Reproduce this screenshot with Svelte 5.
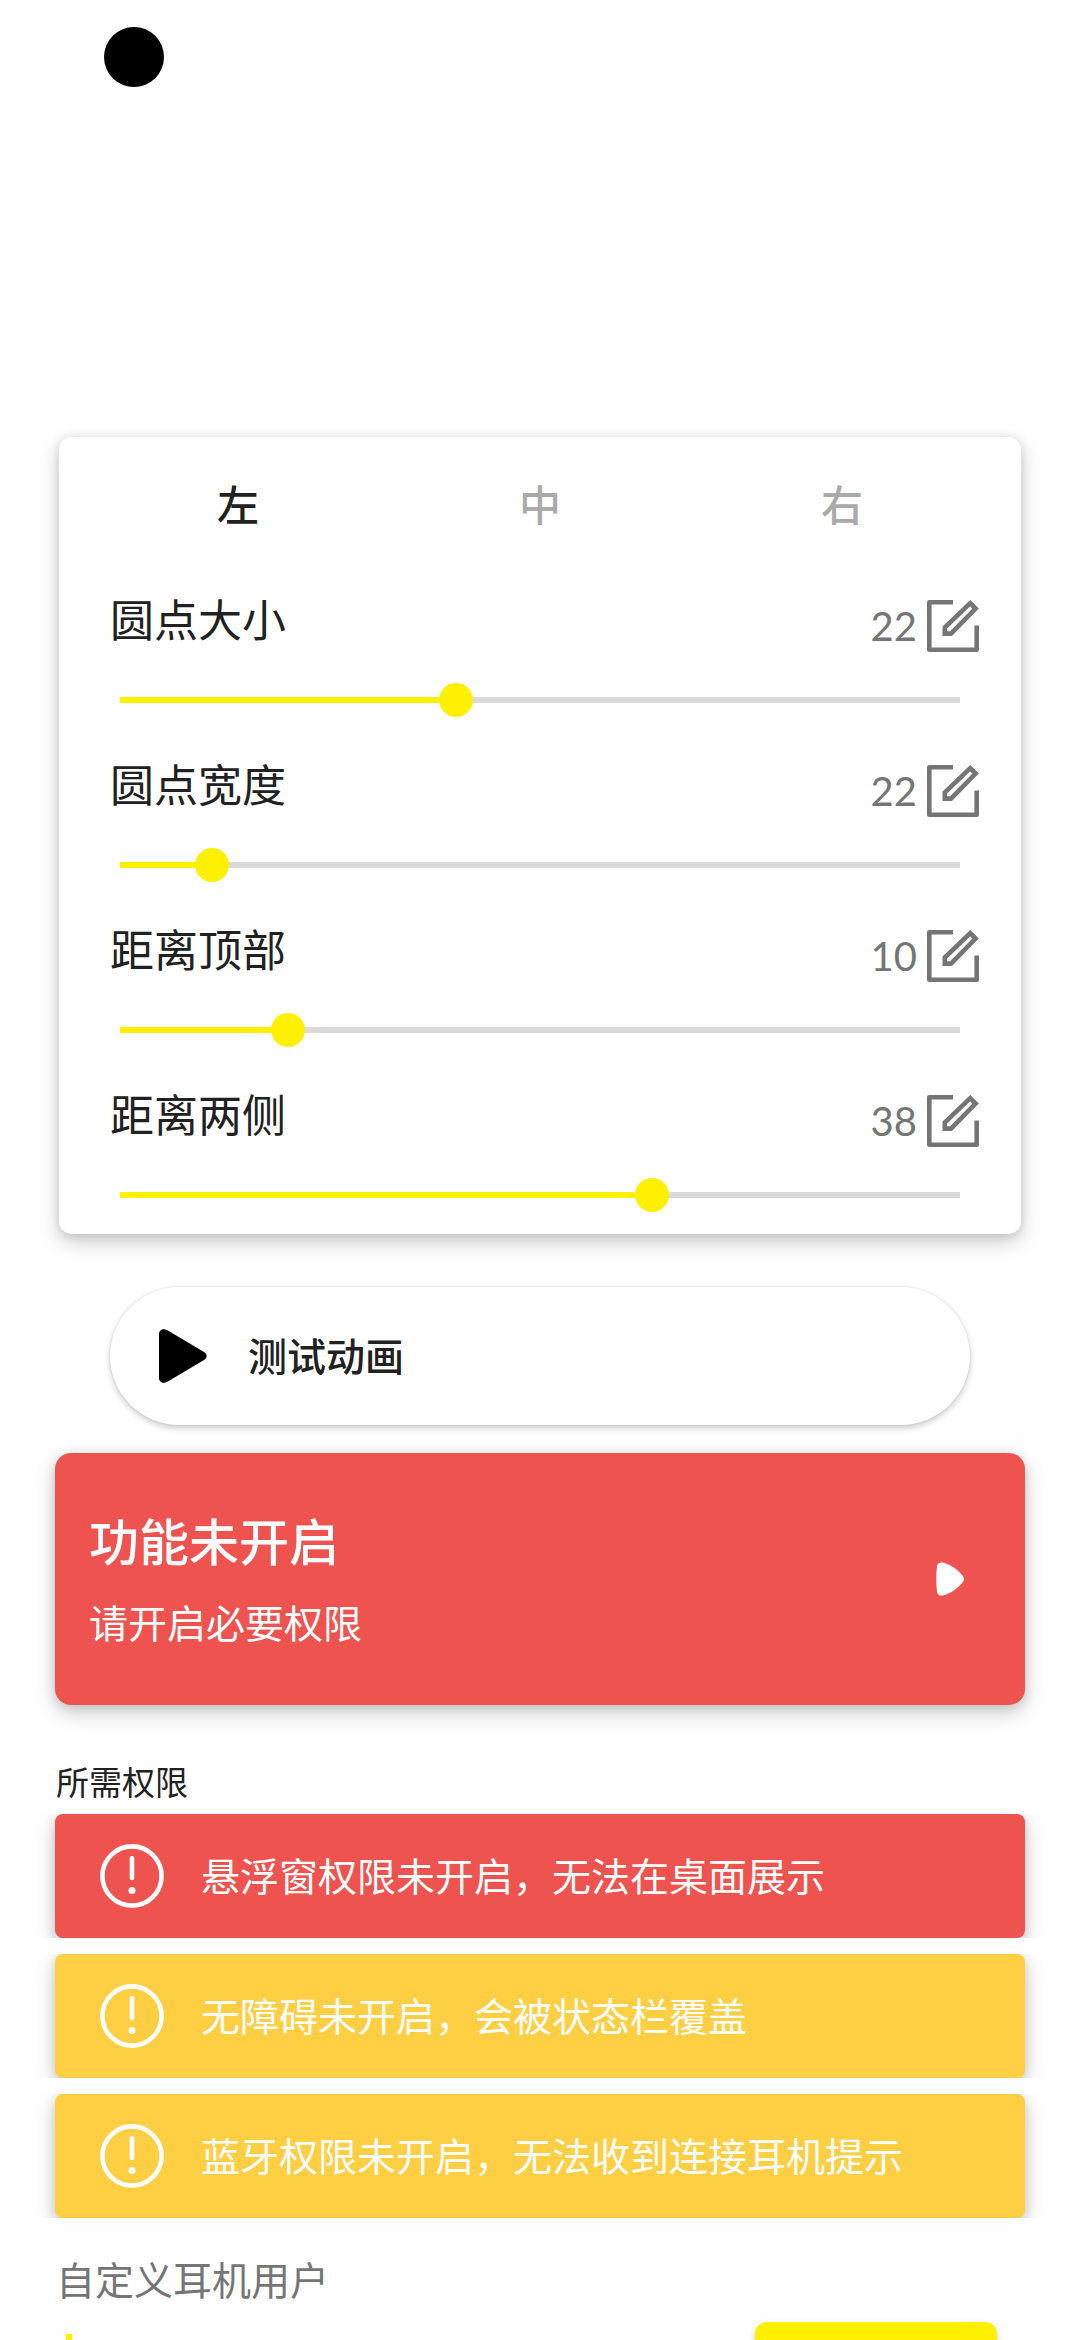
<script lang="ts">
  type Setting = { id: string; label: string; value: number; max: number }

  // px per dp for the preview dot
  const DENSITY = 2.73

  const tabs = [
    { id: 'left', label: '左' },
    { id: 'center', label: '中' },
    { id: 'right', label: '右' },
  ]

  const permissions = [
    { level: 'error', text: '悬浮窗权限未开启，无法在桌面展示' },
    { level: 'warn', text: '无障碍未开启，会被状态栏覆盖' },
    { level: 'warn', text: '蓝牙权限未开启，无法收到连接耳机提示' },
  ]

  let side = $state('left')
  let user = $state('')
  let settings: Setting[] = $state([
    { id: 'size', label: '圆点大小', value: 22, max: 55 },
    { id: 'width', label: '圆点宽度', value: 22, max: 200 },
    { id: 'top', label: '距离顶部', value: 10, max: 50 },
    { id: 'edge', label: '距离两侧', value: 38, max: 60 },
  ])

  const px = (dp: number) => Math.round(dp * DENSITY)
</script>

<main>
  <div
    class="preview {side}"
    style="padding: {px(settings[2].value)}px {px(settings[3].value)}px 0"
  >
    <div
      class="dot"
      style="width: {px(settings[1].value)}px; height: {px(settings[0].value)}px"
    ></div>
  </div>

  <section class="card">
    <div class="tabs" role="tablist">
      {#each tabs as tab (tab.id)}
        <button
          type="button"
          role="tab"
          aria-selected={side === tab.id}
          class:active={side === tab.id}
          onclick={() => (side = tab.id)}>{tab.label}</button
        >
      {/each}
    </div>

    <div class="settings">
      {#each settings as s (s.id)}
        <div class="setting">
          <div class="head">
            <label for={s.id}>{s.label}</label>
            <output for={s.id}>{s.value}</output>
            <button type="button" class="edit" aria-label={s.label}>
              <svg viewBox="0 0 52 52" fill="none" stroke="currentColor" stroke-width="4.600">
                <path d="M26 2.300H2.300v47.400h47.400V25.500" stroke-linejoin="round" />
                <path d="M43.200 3.200l5.400 5.300L24 33.600h-6.200v-6z" />
              </svg>
            </button>
          </div>
          <input
            id={s.id}
            type="range"
            min="0"
            max={s.max}
            bind:value={s.value}
            style="--fill: {(s.value / s.max) * 100}%"
          />
        </div>
      {/each}
    </div>
  </section>

  <button type="button" class="test">
    <svg viewBox="0 0 48 54" aria-hidden="true">
      <path d="M0 5C0 1 4 -1 8 1L45 23C48.500 25 48.500 29 45 31L8 53C4 55 0 53 0 49Z" />
    </svg>
    <span class="caption">测试动画</span>
  </button>

  <button type="button" class="status">
    <span class="status-text">
      <strong>功能未开启</strong>
      <span>请开启必要权限</span>
    </span>
    <svg viewBox="0 0 30 34" aria-hidden="true">
      <path
        d="M2 4C2.500 1 5 0 8 0.500C15 2 23 8 27.500 13.500C29.500 16 29.500 18 27.500 20.500C23 26 15 32 8 33.500C5 34 2.500 33 2 30C1 22 1 12 2 4Z"
      />
    </svg>
  </button>

  <h2>所需权限</h2>
  <div class="permissions">
    {#each permissions as p (p.text)}
      <button type="button" class="permission {p.level}">
        <svg viewBox="0 0 64 64" fill="none" stroke="currentColor" aria-hidden="true">
          <circle cx="32" cy="32" r="29.600" stroke-width="4.600" />
          <path d="M32 14.200V34" stroke-width="4.600" stroke-linecap="round" />
          <circle cx="32" cy="46.500" r="3.500" fill="currentColor" stroke="none" />
        </svg>
        <span class="caption">{p.text}</span>
      </button>
    {/each}
  </div>

  <label class="user-label" for="user">自定义耳机用户</label>
  <div class="user">
    <input id="user" type="text" autocomplete="off" bind:value={user} />
    <button type="button" aria-label="自定义耳机用户"></button>
  </div>
</main>

<style>
  :global(body) {
    background: #fefefe;
  }

  main {
    --red: #ee534f;
    --amber: #fece43;
    --yellow: #fff000;
    --ink: #212121;
    --grey: #757575;
    --shadow: 0 8px 20px rgba(0, 0, 0, 0.18), 0 2px 12px rgba(0, 0, 0, 0.12);
    display: flex;
    flex-direction: column;
    box-sizing: border-box;
    height: 100vh;
    padding: 0 55px;
    overflow-y: auto;
    scrollbar-width: none;
    color: var(--ink);
    font-family: 'Noto Sans CJK SC', sans-serif;
  }

  main > * {
    flex-shrink: 0;
  }

  button {
    padding: 0;
    border: none;
    background: none;
    color: inherit;
    font: inherit;
    text-align: left;
    cursor: pointer;
  }

  svg {
    display: block;
    flex: none;
  }

  .preview {
    display: flex;
    box-sizing: border-box;
    height: 437px;
    margin: 0 -55px;
  }

  .preview.center {
    justify-content: center;
  }

  .preview.right {
    justify-content: flex-end;
  }

  .dot {
    border-radius: 999px;
    background: #000;
  }

  .card {
    margin: 0 4px;
    padding-bottom: 22px;
    border-radius: 13px;
    background: #fff;
    box-shadow: var(--shadow);
  }

  .tabs {
    display: grid;
    grid-template-columns: repeat(3, 1fr);
    padding: 0 28px;
  }

  .tabs button {
    height: 136px;
    padding-bottom: 6px;
    color: #aaa;
    font-size: 42px;
    font-weight: 500;
    text-align: center;
  }

  .tabs .active {
    color: var(--ink);
  }

  .settings {
    display: flex;
    flex-direction: column;
    gap: 42px;
    padding: 21px 42px 0;
  }

  .head {
    display: flex;
    align-items: center;
    height: 64px;
    padding-left: 9px;
  }

  .head label {
    flex: 1;
    align-self: flex-start;
    font-size: 44px;
    line-height: 48px;
  }

  .head output {
    margin-right: 10px;
    color: var(--grey);
    font-family: Lato, sans-serif;
    font-size: 40px;
  }

  .edit {
    color: var(--grey);
  }

  .edit svg {
    width: 52px;
    height: 52px;
  }

  input[type='range'] {
    display: block;
    appearance: none;
    width: calc(100% - 4px);
    height: 34px;
    margin: 25px 2px 0;
    background: linear-gradient(to right, var(--yellow) var(--fill), #dadada var(--fill)) center /
      calc(100% - 34px) 6px no-repeat;
  }

  input[type='range']::-webkit-slider-thumb {
    appearance: none;
    width: 34px;
    height: 34px;
    border-radius: 50%;
    background: var(--yellow);
  }

  .caption {
    padding-bottom: 5px;
  }

  .test {
    display: flex;
    align-items: center;
    gap: 41px;
    height: 138px;
    margin: 53px 55px 28px;
    padding: 0 49px;
    border-radius: 69px;
    background: #fff;
    box-shadow: 0 3px 6px rgba(0, 0, 0, 0.2), 0 0 2px rgba(0, 0, 0, 0.12);
    font-size: 39px;
    font-weight: 500;
  }

  .test svg {
    width: 48px;
    height: 54px;
  }

  .status {
    display: flex;
    align-items: center;
    justify-content: space-between;
    height: 252px;
    padding: 0 60px 0 34px;
    border-radius: 16px;
    background: var(--red);
    box-shadow: var(--shadow);
    color: #fff;
  }

  .status-text {
    display: flex;
    flex-direction: column;
    gap: 16px;
    padding-bottom: 5px;
    font-size: 39px;
    line-height: 60px;
  }

  .status-text strong {
    font-size: 50px;
    font-weight: 500;
    line-height: 72px;
  }

  .status svg {
    width: 30px;
    height: 34px;
    fill: currentColor;
  }

  h2 {
    margin: 52px 0 9px 1px;
    font-size: 33px;
    font-weight: 400;
    line-height: 48px;
  }

  .permissions {
    display: flex;
    flex-direction: column;
    gap: 16px;
  }

  /* shadow only shows at the sides, the list rows cut it off */
  .permission {
    display: flex;
    align-items: center;
    gap: 37px;
    height: 124px;
    padding: 0 45px;
    border-radius: 8px;
    box-shadow: var(--shadow);
    clip-path: inset(0 -30px);
    color: #fff;
    font-size: 39px;
  }

  .permission svg {
    width: 64px;
    height: 64px;
  }

  .error {
    background: var(--red);
  }

  .warn {
    background: var(--amber);
  }

  .user-label {
    margin: 32px 0 16px 1px;
    color: var(--grey);
    font-size: 39px;
    line-height: 56px;
  }

  .user {
    display: flex;
    gap: 40px;
    padding: 0 28px 0 11px;
  }

  .user input {
    flex: 1;
    min-width: 0;
    height: 60px;
    margin-top: 12px;
    padding: 0 12px;
    border: none;
    border-left: 6px solid var(--yellow);
    outline: none;
    background: none;
    font: inherit;
  }

  .user button {
    width: 242px;
    height: 100px;
    border-radius: 12px;
    background: var(--yellow);
    box-shadow: 0 3px 6px rgba(0, 0, 0, 0.2);
  }
</style>
